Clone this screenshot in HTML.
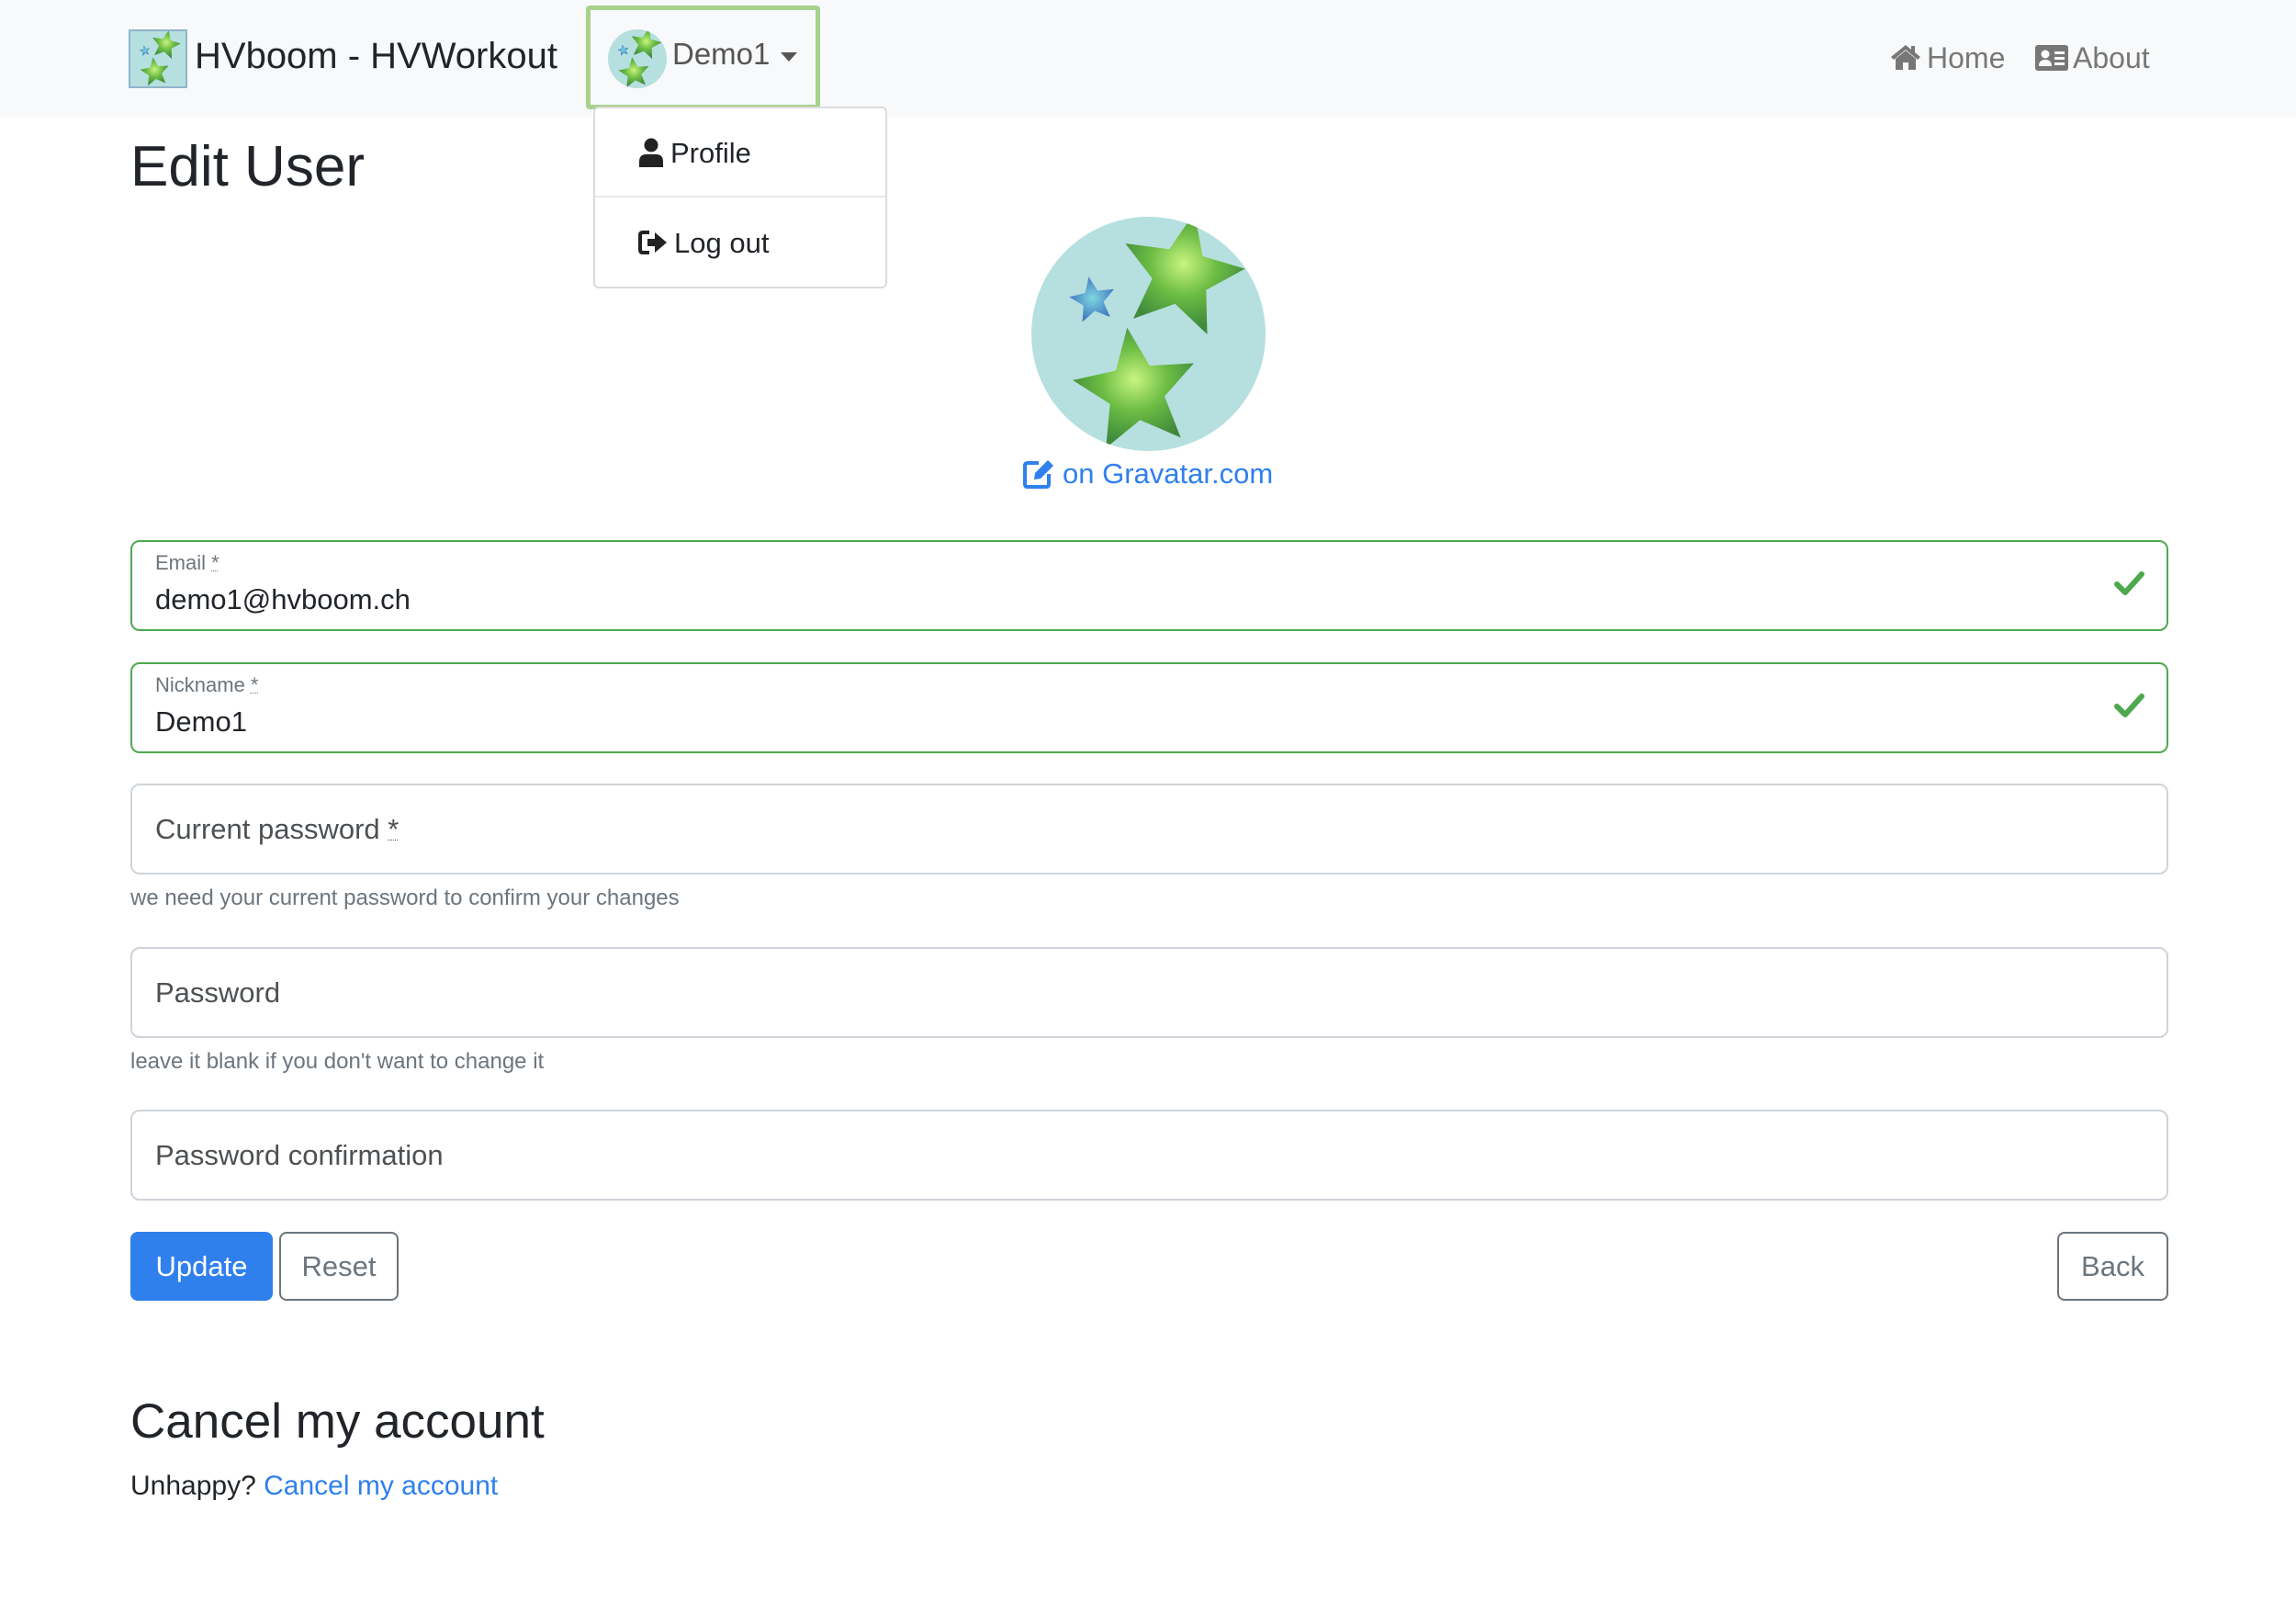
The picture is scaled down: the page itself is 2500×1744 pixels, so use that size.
<!DOCTYPE html>
<html><head><meta charset="utf-8"><style>
*{box-sizing:border-box;margin:0;padding:0}
body{width:2500px;height:1744px;background:#fff;font-family:"Liberation Sans",sans-serif;color:#212529;position:relative;overflow:hidden}
.a{position:absolute;white-space:nowrap}
.nav{position:absolute;left:0;top:0;width:2500px;height:128px;background:#f8f9fa}
.field{position:absolute;left:142px;width:2219px;height:99px;border:2px solid #ced4da;border-radius:10px;background:#fff}
.ok{border-color:#4ea84e}
.lbl{position:absolute;left:25px;font-size:22px;color:#6c757d}
.val{position:absolute;left:25px;font-size:31px;color:#212529}
.ph{position:absolute;left:25px;top:30px;font-size:31px;color:#4d5154}
.help{position:absolute;left:142px;font-size:24px;color:#6c757d}
.chk{position:absolute;right:22px;top:30px}
abbr{text-decoration:underline dotted;text-decoration-thickness:1px}
</style></head><body>
<svg width="0" height="0" style="position:absolute"><defs>
<radialGradient id="g" cx="50%" cy="45%" r="55%"><stop offset="0" stop-color="#c8f580"/><stop offset=".5" stop-color="#6cbc44"/><stop offset="1" stop-color="#3f8a3c"/></radialGradient>
<radialGradient id="b" cx="50%" cy="50%" r="55%"><stop offset="0" stop-color="#7fd6e0"/><stop offset="1" stop-color="#3c72c0"/></radialGradient>
<symbol id="st" viewBox="-1 -1 2 2"><polygon points="0,-1 .265,-.364 .951,-.309 .428,.139 .588,.809 0,.45 -.588,.809 -.428,.139 -.951,-.309 -.265,-.364"/></symbol>
<symbol id="av" viewBox="0 0 255 255">
<rect width="255" height="255" fill="#b6dfdf"/>
<use href="#st" x="93" y="-6" width="140" height="140" fill="url(#g)" transform="rotate(12 163 64)"/>
<use href="#st" x="44" y="120" width="140" height="140" fill="url(#g)" transform="rotate(-8 114 190)"/>
<use href="#st" x="41" y="65" width="52" height="52" fill="url(#b)" transform="rotate(-10 67 91)"/>
</symbol>
</defs></svg>

<div class="nav"></div>
<svg class="a" style="left:140px;top:32px;border:2px solid #8fb5cc" width="64" height="64"><use href="#av" width="60" height="60"/></svg>
<div class="a" style="left:212px;top:39px;font-size:40px;color:#212529">HVboom - HVWorkout</div>
<div class="a" style="left:638px;top:6px;width:255px;height:113px;border:5px solid #a6d28c;border-radius:4px"></div>
<svg class="a" style="left:662px;top:32px;border-radius:50%" width="64" height="64"><use href="#av" width="64" height="64"/></svg>
<div class="a" style="left:732px;top:40px;font-size:33px;color:#555">Demo1</div>
<div class="a" style="left:850px;top:57px;width:0;height:0;border-left:9px solid transparent;border-right:9px solid transparent;border-top:10px solid #555"></div>

<div class="a" style="left:2057px;top:47px"><svg width="36" height="30" viewBox="0 0 36 30"><path d="M18 2 L2 15 L5 18 L18 7 L31 18 L34 15 L28 10 L28 3 L24 3 L24 7 Z M7 17 L7 29 L15 29 L15 21 L21 21 L21 29 L29 29 L29 17 L18 8 Z" fill="#777"/></svg></div>
<div class="a" style="left:2098px;top:45px;font-size:32px;color:#777">Home</div>
<div class="a" style="left:2216px;top:49px"><svg width="36" height="28" viewBox="0 0 36 28"><rect width="36" height="28" rx="3" fill="#777"/><circle cx="11" cy="10" r="4.5" fill="#f8f9fa"/><path d="M4 23 Q4 16 11 16 Q18 16 18 23 Z" fill="#f8f9fa"/><rect x="21" y="7" width="11" height="3" fill="#f8f9fa"/><rect x="21" y="13" width="11" height="3" fill="#f8f9fa"/><rect x="21" y="19" width="11" height="3" fill="#f8f9fa"/></svg></div>
<div class="a" style="left:2257px;top:45px;font-size:32px;color:#777">About</div>

<div class="a" style="left:646px;top:116px;width:320px;height:198px;border:2px solid #dcdcdc;border-radius:6px;background:#fff"></div>
<div class="a" style="left:648px;top:213px;width:316px;height:2px;background:#e9e9ee"></div>
<div class="a" style="left:695px;top:150px"><svg width="28" height="32" viewBox="0 0 28 32"><circle cx="14" cy="8" r="7.5" fill="#222"/><path d="M1 32 L1 26 Q1 18 9 18 L19 18 Q27 18 27 26 L27 32 Z" fill="#222"/></svg></div>
<div class="a" style="left:730px;top:149px;font-size:31px;color:#212529">Profile</div>
<div class="a" style="left:695px;top:250px"><svg width="32" height="28" viewBox="0 0 32 28"><path d="M12 3 L5 3 Q2 3 2 6 L2 22 Q2 25 5 25 L12 25" stroke="#222" stroke-width="4" fill="none"/><path d="M10 10 L18 10 L18 3 L31 14 L18 25 L18 18 L10 18 Z" fill="#222"/></svg></div>
<div class="a" style="left:734px;top:247px;font-size:31px;color:#212529">Log out</div>

<div class="a" style="left:142px;top:146px;font-size:62px;color:#212529">Edit User</div>

<svg class="a" style="left:1123px;top:236px;border-radius:50%" width="255" height="255"><use href="#av" width="255" height="255"/></svg>
<div class="a" style="left:1113px;top:499px"><svg width="36" height="34" viewBox="0 0 36 34"><path d="M18 5 L6 5 Q3 5 3 8 L3 28 Q3 31 6 31 L26 31 Q29 31 29 28 L29 17" stroke="#2f80ed" stroke-width="4" fill="none"/><path d="M13 23 L14 16 L28 2 L34 8 L20 22 Z" fill="#2f80ed"/></svg></div>
<div class="a" style="left:1157px;top:498px;font-size:31px;color:#2f80ed">on Gravatar.com</div>

<div class="field ok" style="top:588px"><div class="lbl" style="top:10px">Email <abbr>*</abbr></div><div class="val" style="top:45px">demo1@hvboom.ch</div><svg class="chk" width="36" height="30" viewBox="0 0 36 30"><path d="M4 16 L13 25 L31 5" stroke="#4ea84e" stroke-width="6" fill="none" stroke-linecap="round" stroke-linejoin="round"/></svg></div>
<div class="field ok" style="top:721px"><div class="lbl" style="top:10px">Nickname <abbr>*</abbr></div><div class="val" style="top:45px">Demo1</div><svg class="chk" width="36" height="30" viewBox="0 0 36 30"><path d="M4 16 L13 25 L31 5" stroke="#4ea84e" stroke-width="6" fill="none" stroke-linecap="round" stroke-linejoin="round"/></svg></div>
<div class="field" style="top:853px"><div class="ph">Current password <abbr>*</abbr></div></div>
<div class="help" style="top:964px">we need your current password to confirm your changes</div>
<div class="field" style="top:1031px"><div class="ph">Password</div></div>
<div class="help" style="top:1142px">leave it blank if you don't want to change it</div>
<div class="field" style="top:1208px"><div class="ph">Password confirmation</div></div>

<div class="a" style="left:142px;top:1341px;width:155px;height:75px;background:#2f80ed;border-radius:8px;color:#fff;font-size:31px;text-align:center;line-height:75px">Update</div>
<div class="a" style="left:304px;top:1341px;width:130px;height:75px;border:2px solid #6c757d;border-radius:8px;color:#6c757d;font-size:31px;text-align:center;line-height:71px">Reset</div>
<div class="a" style="left:2240px;top:1341px;width:121px;height:75px;border:2px solid #6c757d;border-radius:8px;color:#6c757d;font-size:31px;text-align:center;line-height:71px">Back</div>

<div class="a" style="left:142px;top:1517px;font-size:53px;color:#212529">Cancel my account</div>
<div class="a" style="left:142px;top:1601px;font-size:30px;color:#212529">Unhappy? <span style="color:#2f80ed">Cancel my account</span></div>
</body></html>
